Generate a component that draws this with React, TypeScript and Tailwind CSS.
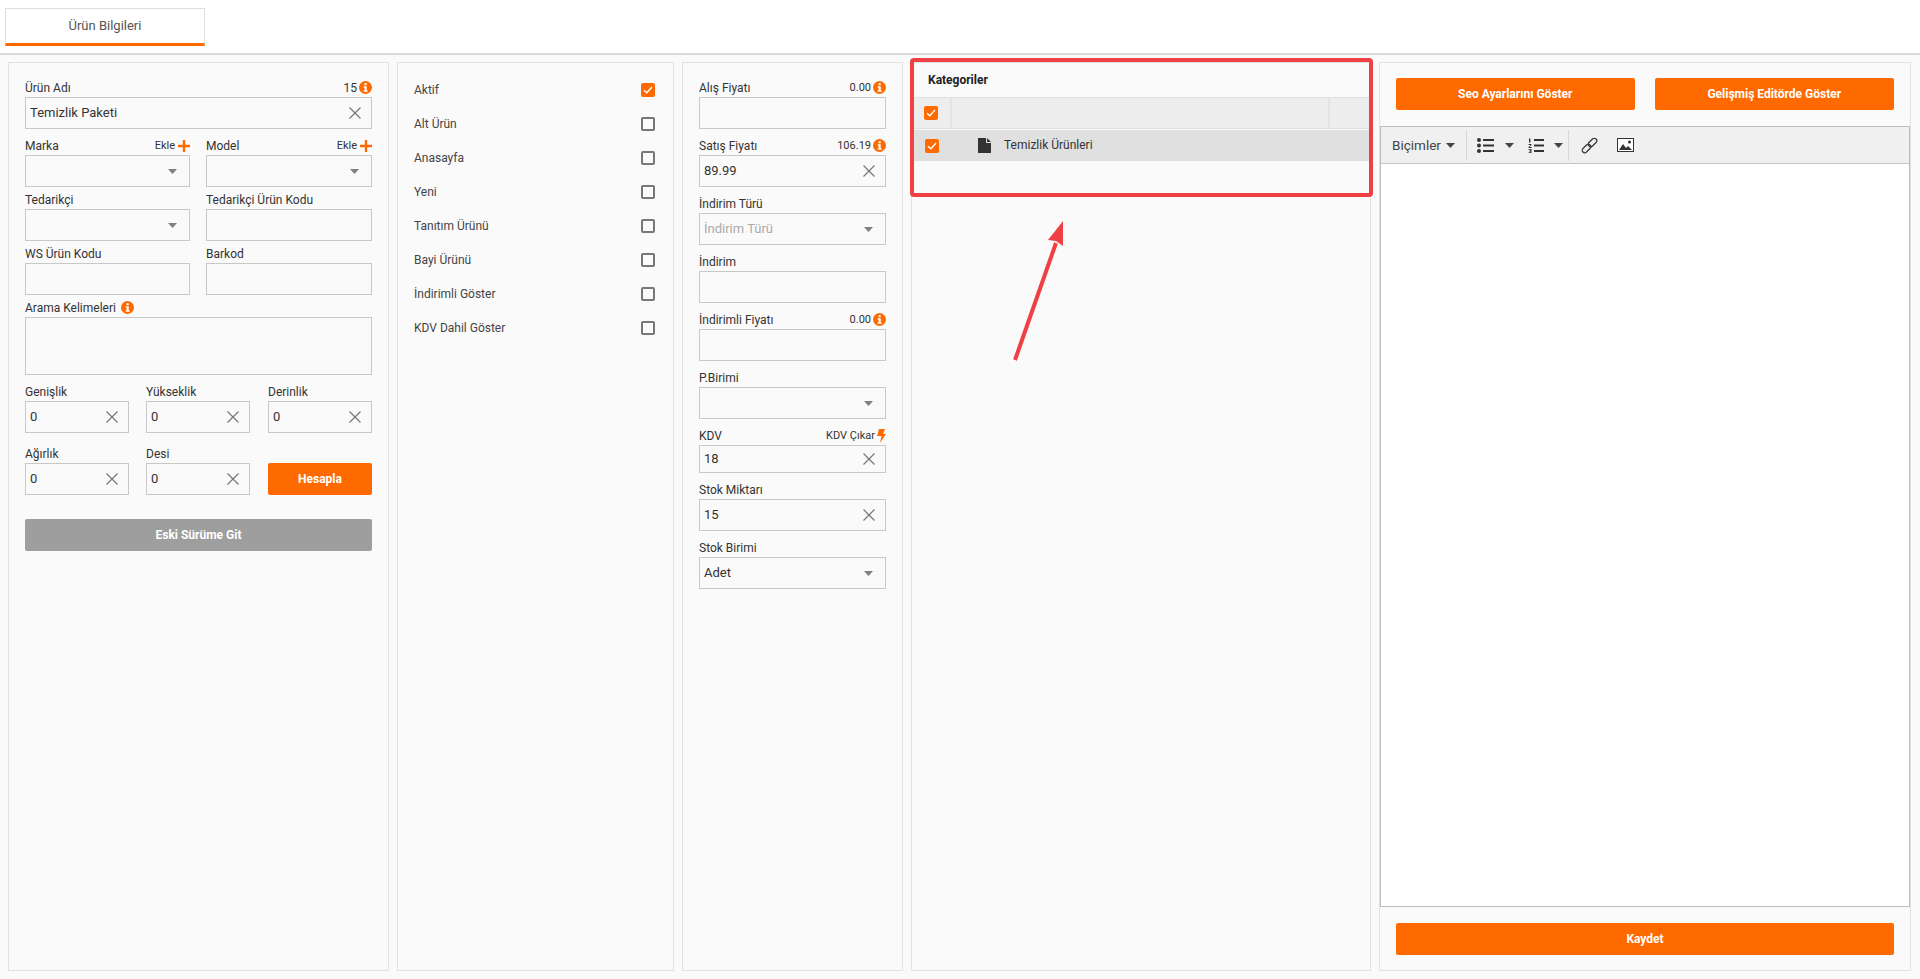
import React from "react";

const InfoIcon: React.FC = () => (
  <svg width="13" height="13" viewBox="0 0 13 13" className="shrink-0 -mt-[2px]">
    <circle cx="6.5" cy="6.5" r="6.5" fill="#ff6a00" />
    <rect x="5.5" y="2.2" width="2.2" height="2" fill="#fff" />
    <path d="M4.6 5.2h3.1v4.4h1v1.2H4.6V9.6h1V6.4h-1z" fill="#fff" />
  </svg>
);

const ClearIcon: React.FC = () => (
  <svg width="12" height="12" viewBox="0 0 12 12" className="shrink-0">
    <path d="M0.5 0.5L11.5 11.5M11.5 0.5L0.5 11.5" stroke="#777" strokeWidth="1.2" fill="none" />
  </svg>
);

const Caret: React.FC<{ color?: string }> = ({ color = "#808080" }) => (
  <svg width="9" height="5" viewBox="0 0 9 5" className="shrink-0">
    <path d="M0 0h9L4.5 5z" fill={color} />
  </svg>
);

const PlusIcon: React.FC = () => (
  <svg width="12" height="12" viewBox="0 0 12 12" className="shrink-0">
    <path d="M4.8 0h2.4v4.8H12v2.4H7.2V12H4.8V7.2H0V4.8h4.8z" fill="#ff6a00" />
  </svg>
);

const BoltIcon: React.FC = () => (
  <svg width="9" height="14" viewBox="0 0 9 14" className="shrink-0">
    <path d="M2 0h6L6 5h3L3 14l1.5-7H0z" fill="#ff6a00" />
  </svg>
);

const CheckBox: React.FC<{ checked?: boolean }> = ({ checked }) =>
  checked ? (
    <div className="w-[14px] h-[14px] rounded-[2px] bg-[#ff6a00] flex items-center justify-center shrink-0">
      <svg width="10" height="8" viewBox="0 0 10 8">
        <path d="M1 4.2L3.8 6.8L9 1" stroke="#fff" strokeWidth="1.4" fill="none" />
      </svg>
    </div>
  ) : (
    <div className="w-[14px] h-[14px] rounded-[2px] border-2 border-[#777] shrink-0" />
  );

const Field: React.FC<{
  label: string;
  right?: React.ReactNode;
  className?: string;
  children: React.ReactNode;
}> = ({ label, right, className = "", children }) => (
  <div className={className}>
    <div className="h-[17px] pb-px flex items-center justify-between text-[12px] text-[#333]">
      <span>{label}</span>
      {right}
    </div>
    {children}
  </div>
);

const TextBox: React.FC<{ value?: string; clear?: boolean; height?: string }> = ({ value = "", clear, height = "h-8" }) => (
  <div className={`${height} border border-[#c8c8c8] flex items-center pl-[4px] pr-[10px] text-[13px] text-[#333]`}>
    <input readOnly value={value} className="flex-1 min-w-0 bg-transparent outline-none" />
    {clear && <ClearIcon />}
  </div>
);

const SelectBox: React.FC<{ value?: string; placeholder?: boolean }> = ({ value = "", placeholder }) => (
  <div className="h-8 border border-[#c8c8c8] flex items-center justify-between pl-[4px] pr-[12px] text-[13px]">
    <span className={placeholder ? "text-[#aaa]" : "text-[#333]"}>{value}</span>
    <Caret />
  </div>
);

const Counter: React.FC<{ value: string; large?: boolean }> = ({ value, large }) => (
  <span className={`flex items-center gap-[2px] ${large ? "text-[12px]" : "text-[11px]"}`}>
    {value}
    <InfoIcon />
  </span>
);

const AddLink: React.FC = () => (
  <span className="flex items-center gap-[3px] text-[11px]">
    Ekle
    <PlusIcon />
  </span>
);

const OrangeButton: React.FC<{ label: string; className?: string }> = ({ label, className = "" }) => (
  <button className={`h-8 rounded-[2px] bg-[#ff6a00] text-white text-[12px] font-bold ${className}`}>{label}</button>
);

const flags = ["Aktif", "Alt Ürün", "Anasayfa", "Yeni", "Tanıtım Ürünü", "Bayi Ürünü", "İndirimli Göster", "KDV Dahil Göster"];

const panel = "h-full border border-[#e2e2e2] bg-[#fafafa] shrink-0";

export default function App() {
  return (
    <div className="relative h-[979px] overflow-hidden flex flex-col bg-[#fafafa] font-['Roboto',sans-serif]">
      <header className="h-[55px] shrink-0 bg-white border-b-2 border-[#d9d9d9] pl-[5px] pt-2">
        <div className="w-[200px] h-[38px] border border-b-[3px] border-[#dedede] border-b-[#ff6a00] flex items-center justify-center text-[13px] text-[#555]">
          Ürün Bilgileri
        </div>
      </header>

      <main className="flex-1 min-h-0 flex gap-2 pl-2 pt-[7px] pb-2">
        {/* urun bilgileri */}
        <section className={`${panel} w-[381px] px-4 pt-[17px]`}>
          <Field label="Ürün Adı" right={<Counter value="15" large />}>
            <TextBox value="Temizlik Paketi" clear />
          </Field>
          <div className="grid grid-cols-[165px_166px] gap-x-4">
            <Field label="Marka" right={<AddLink />} className="mt-[9px]">
              <SelectBox />
            </Field>
            <Field label="Model" right={<AddLink />} className="mt-[9px]">
              <SelectBox />
            </Field>
            <Field label="Tedarikçi" className="mt-[5px]">
              <SelectBox />
            </Field>
            <Field label="Tedarikçi Ürün Kodu" className="mt-[5px]">
              <TextBox />
            </Field>
            <Field label="WS Ürün Kodu" className="mt-[5px]">
              <TextBox />
            </Field>
            <Field label="Barkod" className="mt-[5px]">
              <TextBox />
            </Field>
          </div>
          <Field
            label="Arama Kelimeleri"
            right={
              <span className="mr-auto ml-[5px] flex">
                <InfoIcon />
              </span>
            }
            className="mt-[5px]"
          >
            <div className="h-[58px] border border-[#c8c8c8]" />
          </Field>
          <div className="grid grid-cols-[121px_122px_104px]">
            <Field label="Genişlik" className="mt-[9px] w-[104px]">
              <TextBox value="0" clear />
            </Field>
            <Field label="Yükseklik" className="mt-[9px] w-[104px]">
              <TextBox value="0" clear />
            </Field>
            <Field label="Derinlik" className="mt-[9px] w-[104px]">
              <TextBox value="0" clear />
            </Field>
            <Field label="Ağırlık" className="mt-[13px] w-[104px]">
              <TextBox value="0" clear />
            </Field>
            <Field label="Desi" className="mt-[13px] w-[104px]">
              <TextBox value="0" clear />
            </Field>
            <div className="mt-[13px] pt-[17px]">
              <OrangeButton label="Hesapla" className="w-full" />
            </div>
          </div>
          <button className="mt-6 w-full h-8 rounded-[2px] bg-[#9e9e9e] text-white text-[12px] font-bold">Eski Sürüme Git</button>
        </section>

        {/* durum secenekleri */}
        <section className={`${panel} w-[277px] pl-4 pr-[18px] pt-[10px]`}>
          {flags.map((f, i) => (
            <div key={f} className="h-[34px] flex items-center justify-between text-[12px] text-[#444]">
              <span>{f}</span>
              <CheckBox checked={i === 0} />
            </div>
          ))}
        </section>

        {/* fiyat */}
        <section className={`${panel} w-[221px] px-4 pt-[17px]`}>
          <Field label="Alış Fiyatı" right={<Counter value="0.00" />}>
            <TextBox />
          </Field>
          <Field label="Satış Fiyatı" right={<Counter value="106.19" />} className="mt-[9px]">
            <TextBox value="89.99" clear />
          </Field>
          <Field label="İndirim Türü" className="mt-[9px]">
            <SelectBox value="İndirim Türü" placeholder />
          </Field>
          <Field label="İndirim" className="mt-[9px]">
            <TextBox />
          </Field>
          <Field label="İndirimli Fiyatı" right={<Counter value="0.00" />} className="mt-[9px]">
            <TextBox />
          </Field>
          <Field label="P.Birimi" className="mt-[9px]">
            <SelectBox />
          </Field>
          <Field
            label="KDV"
            right={
              <span className="flex items-center gap-[2px] text-[11px]">
                KDV Çıkar
                <BoltIcon />
              </span>
            }
            className="mt-[9px]"
          >
            <TextBox value="18" clear height="h-7" />
          </Field>
          <Field label="Stok Miktarı" className="mt-[9px]">
            <TextBox value="15" clear />
          </Field>
          <Field label="Stok Birimi" className="mt-[9px]">
            <SelectBox value="Adet" />
          </Field>
        </section>

        {/* kategoriler */}
        <section className={`${panel} w-[460px]`}>
          <div className="h-[34px] pl-4 flex items-center text-[12px] font-bold text-[#222]">Kategoriler</div>
          <div className="h-8 flex bg-[#ededed] border-y border-[#e0e0e0]">
            <div className="w-[40px] pl-3 flex items-center border-r-2 border-[#e4e4e4]">
              <CheckBox checked />
            </div>
            <div className="w-[378px] border-r-2 border-[#e4e4e4]" />
          </div>
          <div className="h-[31px] mt-px flex items-center bg-[#e0e0e0]">
            <div className="w-[66px] pl-[13px]">
              <CheckBox checked />
            </div>
            <svg width="13" height="15" viewBox="0 0 13 15" className="shrink-0">
              <path d="M0 0h8v5h5v10H0zM9 0l4 4H9z" fill="#333" />
            </svg>
            <span className="ml-[13px] text-[12px] text-[#333] -mt-[2px]">Temizlik Ürünleri</span>
          </div>
        </section>

        {/* aciklama */}
        <section className={`${panel} w-[532px] flex flex-col`}>
          <div className="h-[63px] shrink-0 px-4 pt-[15px] flex gap-5">
            <OrangeButton label="Seo Ayarlarını Göster" className="w-[239px]" />
            <OrangeButton label="Gelişmiş Editörde Göster" className="w-[240px]" />
          </div>
          <div className="flex-1 min-h-0 border border-[#bdbdbd] bg-white flex flex-col">
            <div className="h-[37px] shrink-0 bg-[#f0f0f0] border-b border-[#c4c4c4] flex items-center">
              <div className="w-[86px] h-[31px] pl-[11px] flex items-center gap-[5px] border-r border-[#d8d8d8] text-[13.5px] text-[#444]">
                Biçimler
                <Caret color="#444" />
              </div>
              <div className="w-[102px] h-[31px] pl-[10px] flex items-center border-r border-[#d8d8d8]">
                <svg width="17" height="15" viewBox="0 0 17 15" className="shrink-0">
                  <circle cx="2" cy="2" r="2" fill="#333" />
                  <circle cx="2" cy="7.5" r="2" fill="#333" />
                  <circle cx="2" cy="13" r="2" fill="#333" />
                  <path d="M6 1h11v2H6zM6 6.5h11v2H6zM6 12h11v2H6z" fill="#333" />
                </svg>
                <span className="ml-[11px]">
                  <Caret color="#444" />
                </span>
                <svg width="16" height="15" viewBox="0 0 16 15" className="ml-[14px] shrink-0">
                  <path d="M1 0.5h1.4v4H1zM0.5 6h3v1L1.6 9h2v1h-3V9l2-2h-2zM0.5 11h3v4h-3v-0.8h2v-0.8h-1.2v-0.8h1.2v-0.8h-2z" fill="#333" />
                  <path d="M6 1h10v2H6zM6 6.5h10v2H6zM6 12h10v2H6z" fill="#333" />
                </svg>
                <span className="ml-[10px]">
                  <Caret color="#444" />
                </span>
              </div>
              <svg width="17" height="17" viewBox="0 0 17 17" fill="none" stroke="#333" strokeWidth="1.2" className="ml-3 shrink-0">
                <rect x="9" y="0.5" width="5" height="10" rx="2.5" transform="rotate(45 11.5 5.5)" />
                <rect x="3" y="6.5" width="5" height="10" rx="2.5" transform="rotate(45 5.5 11.5)" />
              </svg>
              <svg width="17" height="14" viewBox="0 0 17 14" className="ml-[19px] shrink-0">
                <rect x="0.5" y="0.5" width="16" height="13" fill="#fff" stroke="#333" />
                <path d="M2 12l4-6 3 4 2-2 4 4z" fill="#333" />
                <circle cx="12.5" cy="4" r="1.5" fill="#333" />
              </svg>
            </div>
          </div>
          <div className="h-[63px] shrink-0 px-4 pt-4">
            <OrangeButton label="Kaydet" className="w-full" />
          </div>
        </section>
      </main>

      {/* annotation over the screenshot */}
      <div className="absolute left-[910px] top-[58px] w-[463px] h-[139px] border-4 border-[#ef4043] rounded-[4px] pointer-events-none" />
      <svg className="absolute left-[1005px] top-[215px] pointer-events-none" width="70" height="150" viewBox="0 0 70 150">
        <path d="M10 145L51 28" stroke="#ef4043" strokeWidth="4" fill="none" />
        <path d="M58 6L58 31L51 26L43 25z" fill="#ef4043" />
      </svg>
    </div>
  );
}
